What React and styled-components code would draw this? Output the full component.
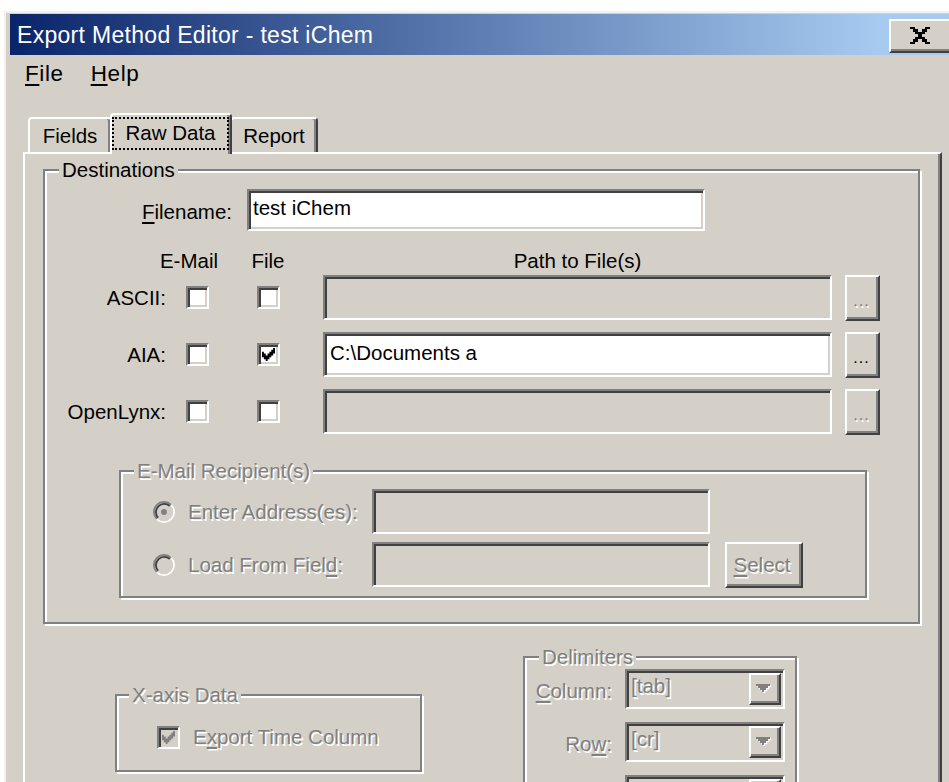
import React from "react";
import styled, { createGlobalStyle, css } from "styled-components";

const FACE = "#d4d0c8";
const SHADOW = "#808080";
const DARK = "#404040";

const GlobalStyle = createGlobalStyle`
  html, body { margin: 0; padding: 0; background: #fff; }
  #root { width: 949px; height: 782px; overflow: hidden; }
  * { box-sizing: border-box; }
`;

// classic 3d edges
const sunken = css`
  border: 2px solid;
  border-color: ${SHADOW} #fff #fff ${SHADOW};
  box-shadow: inset 2px 2px 0 ${DARK}, inset -2px -2px 0 ${FACE};
`;

const raised = css`
  border: 2px solid;
  border-color: #fff ${DARK} ${DARK} #fff;
  box-shadow: inset -2px -2px 0 ${SHADOW};
  background: ${FACE};
`;

const greyed = css`
  color: ${SHADOW};
  text-shadow: 1.5px 1.5px 0 #fff;
`;

const Window = styled.div`
  margin: 11px 0 0 4px;
  width: 954px;
  height: 800px;
  background: ${FACE};
  border-top: 2px solid #f2f1ed;
  border-left: 2px solid #f2f1ed;
  padding: 1px 4px 0 4px;
  font-family: "Liberation Sans", Arial, sans-serif;
  font-size: 20.5px;
  line-height: 24px;
  color: #000;
`;

const TitleBar = styled.div`
  display: flex;
  align-items: center;
  justify-content: space-between;
  height: 41px;
  padding: 0 0 0 7px;
  background: linear-gradient(to right, #0a246a 0%, #a6caf0 92%, #a6caf0 100%);
`;

const TitleText = styled.span`
  color: #fff;
  font-size: 23px;
  letter-spacing: 0.3px;
`;

const CloseButton = styled.div`
  ${raised};
  width: 65px;
  height: 34px;
  margin-top: 3px;
  display: flex;
  align-items: center;
  justify-content: center;
  padding: 0 4px 2px 0;
`;

const MenuBar = styled.div`
  display: flex;
  gap: 27px;
  height: 38px;
  padding: 7px 0 0 15px;
  font-size: 22.5px;
`;

const MenuItem = styled.span`
  letter-spacing: 0.6px;
`;

const U = styled.span`
  text-decoration: underline;
  text-underline-offset: 3px;
`;

const TabArea = styled.div`
  padding: 20px 12px 0 13px;
`;

const TabStrip = styled.div`
  display: flex;
  align-items: flex-end;
  height: 39px;
  padding-left: 5px;
`;

const Tab = styled.div`
  position: relative;
  width: ${(p) => p.$w}px;
  height: 35px;
  display: flex;
  align-items: center;
  justify-content: center;
  background: ${FACE};
  border: 2px solid;
  border-bottom: none;
  border-color: #fff ${DARK} transparent #fff;
  border-radius: 4px 4px 0 0;
  box-shadow: inset -2px 0 0 ${SHADOW};
  ${(p) =>
    p.$active &&
    css`
      z-index: 1;
      height: 41px;
      margin: 0 -2px -2px;
      align-items: stretch;
      padding: 0 1px 0 0;
    `}
`;

const Focus = styled.span`
  flex: 1;
  display: flex;
  align-items: center;
  justify-content: center;
  margin: 2px 0 4px;
  padding-bottom: 2px;
  border: 2px dotted #000;
`;

const Panel = styled.div`
  height: 640px;
  border-top: 2px solid #fff;
  border-left: 2px solid #fff;
  border-right: 2px solid ${DARK};
  box-shadow: inset -2px 0 0 ${SHADOW};
  padding: 4px 20px 0 18px;
`;

const Group = styled.fieldset`
  margin: 0;
  min-width: 0;
  padding: 0 0 ${(p) => p.$pb || 0}px;
  border: 2px solid ${SHADOW};
  box-shadow: inset 2px 2px 0 #fff, 2px 2px 0 #fff;
`;

const Legend = styled.legend`
  margin-left: ${(p) => p.$ml}px;
  padding: 0 3px;
  line-height: 24px;
  background: ${FACE};
  ${(p) => p.$off && greyed}
`;

const FilenameRow = styled.div`
  display: flex;
  align-items: flex-start;
  margin-top: 7px;
`;

const FieldLabel = styled.span`
  width: 187px;
  text-align: right;
  padding-top: 11px;
  margin-right: 15px;
`;

const TextBox = styled.div`
  ${sunken};
  display: flex;
  align-items: center;
  width: ${(p) => (p.$w ? `${p.$w}px` : "auto")};
  height: ${(p) => p.$h}px;
  padding: 0 4px 4px;
  background: ${(p) => (p.$off ? FACE : "#fff")};
  white-space: nowrap;
  overflow: hidden;
`;

const cols = "131px 42px 100px 519px 43px";

const HeadGrid = styled.div`
  display: grid;
  grid-template-columns: ${cols};
  height: 24px;
  margin-top: 18px;
`;

const Head = styled.span`
  justify-self: ${(p) => p.$align || "center"};
  white-space: nowrap;
`;

const DestGrid = styled.div`
  display: grid;
  grid-template-columns: ${cols};
  grid-auto-rows: 45px;
  row-gap: 12px;
  margin-top: 2px;
  align-items: center;
`;

const RowLabel = styled.span`
  justify-self: end;
  padding-right: 10px;
`;

const Box = styled.span`
  ${sunken};
  justify-self: center;
  width: 23px;
  height: 23px;
  display: flex;
  align-items: center;
  justify-content: center;
  background: ${(p) => (p.$off ? FACE : "#fff")};
`;

const PathBox = styled(TextBox)`
  margin: 0 5px;
  padding-left: 5px;
`;

const Browse = styled.div`
  ${raised};
  justify-self: end;
  width: 35px;
  height: 46px;
  display: flex;
  align-items: center;
  justify-content: center;
  padding: 6px 2px 0 0;
  font-size: 16px;
  letter-spacing: 1px;
  ${(p) => p.$off && greyed}
`;

const Recipients = styled(Group)`
  margin: 25px 51px 0 74px;
`;

const RadioRow = styled.div`
  display: flex;
  align-items: center;
  height: 45px;
  margin-top: ${(p) => p.$mt}px;
  padding-left: 32px;
`;

const RadioText = styled.span`
  width: 184px;
  margin-left: 13px;
  white-space: nowrap;
  ${greyed}
`;

const PushButton = styled.div`
  ${raised};
  width: 78px;
  height: 46px;
  margin-left: 15px;
  display: flex;
  align-items: center;
  justify-content: center;
  padding-right: 4px;
  ${greyed}
`;

const BottomRow = styled.div`
  display: flex;
  align-items: flex-start;
  margin-top: 21px;
`;

const AxisGroup = styled(Group)`
  width: 307px;
  height: 89px;
  margin: 38px 0 0 72px;
`;

const CheckRow = styled.div`
  display: flex;
  align-items: center;
  margin-top: 18px;
  padding-left: 40px;
`;

const CheckText = styled.span`
  margin-left: 13px;
  ${greyed}
`;

const DelimGroup = styled(Group)`
  width: 274px;
  height: 200px;
  margin-left: 101px;
`;

const DelimGrid = styled.div`
  display: grid;
  grid-template-columns: 87px 160px;
  grid-auto-rows: 40px;
  column-gap: 13px;
  row-gap: 13px;
  align-items: center;
`;

const DelimLabel = styled.span`
  justify-self: end;
  padding-top: 4px;
  ${greyed}
`;

const Combo = styled.div`
  ${sunken};
  display: flex;
  justify-content: space-between;
  height: 40px;
  padding: 2px 2px 2px 4px;
  background: ${FACE};
`;

const ComboText = styled.span`
  padding-top: 1px;
  ${greyed}
`;

const DropButton = styled.span`
  ${raised};
  width: 32px;
  display: flex;
  align-items: center;
  justify-content: center;
  padding: 0 2px 2px 0;
`;

const CloseGlyph = () => (
  <svg width="20" height="17" viewBox="0 0 8 7" shapeRendering="crispEdges">
    <path
      fill="#000"
      d="M0 0h2v1H0zM6 0h2v1H6zM1 1h2v1H1zM5 1h2v1H5zM2 2h4v1H2zM3 3h2v1H3zM2 4h4v1H2zM1 5h2v1H1zM5 5h2v1H5zM0 6h2v1H0zM6 6h2v1H6z"
    />
  </svg>
);

const checkPath =
  "M6 0h1v1H6zM5 1h2v1H5zM0 2h1v1H0zM4 2h3v1H4zM0 3h2v1H0zM3 3h3v1H3zM0 4h5v1H0zM1 5h3v1H1zM2 6h1v1H2z";

const CheckMark = ({ off }) => (
  <svg width="13" height="13" viewBox="0 0 7 7">
    <path fill={off ? SHADOW : "#000"} d={checkPath} />
  </svg>
);

const Radio = ({ on }) => (
  <svg width="22" height="22" viewBox="0 0 12 12">
    <circle cx="6" cy="6" r="4.2" fill={FACE} />
    <path d="M2.11 9.89A5.5 5.5 0 0 1 9.89 2.11" stroke={SHADOW} fill="none" />
    <path d="M9.89 2.11A5.5 5.5 0 0 1 2.11 9.89" stroke="#fff" fill="none" />
    <path d="M2.82 9.18A4.5 4.5 0 0 1 9.18 2.82" stroke={DARK} fill="none" />
    <path d="M9.18 2.82A4.5 4.5 0 0 1 2.82 9.18" stroke={FACE} fill="none" />
    {on && <circle cx="6" cy="6" r="1.6" fill={SHADOW} />}
  </svg>
);

const DownArrow = () => (
  <svg width="16" height="9" viewBox="0 0 8 4.5">
    <path fill="#fff" transform="translate(0.6 0.6)" d="M0 0h7v1H0zM1 1h5v1H1zM2 2h3v1H2zM3 3h1v1H3z" />
    <path fill={SHADOW} d="M0 0h7v1H0zM1 1h5v1H1zM2 2h3v1H2zM3 3h1v1H3z" />
  </svg>
);

const destinations = [
  { name: "ASCII:", file: false, path: "" },
  { name: "AIA:", file: true, path: "C:\\Documents a" },
  { name: "OpenLynx:", file: false, path: "" },
];

export default function App() {
  return (
    <>
      <GlobalStyle />
      <Window>
        <TitleBar>
          <TitleText>Export Method Editor - test iChem</TitleText>
          <CloseButton>
            <CloseGlyph />
          </CloseButton>
        </TitleBar>

        <MenuBar>
          <MenuItem>
            <U>F</U>ile
          </MenuItem>
          <MenuItem>
            <U>H</U>elp
          </MenuItem>
        </MenuBar>

        <TabArea>
          <TabStrip>
            <Tab $w={84}>Fields</Tab>
            <Tab $w={122} $active>
              <Focus>Raw Data</Focus>
            </Tab>
            <Tab $w={88}>Report</Tab>
          </TabStrip>

          <Panel>
            <Group $pb={24}>
              <Legend $ml={14}>Destinations</Legend>
              <FilenameRow>
                <FieldLabel>
                  <U>F</U>ilename:
                </FieldLabel>
                <TextBox $w={458} $h={42}>
                  test iChem
                </TextBox>
              </FilenameRow>

              <HeadGrid>
                <span />
                <Head $align="end">E-Mail</Head>
                <Head>File</Head>
                <Head>Path to File(s)</Head>
              </HeadGrid>

              <DestGrid>
                {destinations.map((d) => (
                  <React.Fragment key={d.name}>
                    <RowLabel>{d.name}</RowLabel>
                    <Box />
                    <Box>{d.file && <CheckMark />}</Box>
                    <PathBox $h={45} $off={!d.path}>
                      {d.path}
                    </PathBox>
                    <Browse $off={!d.path}>...</Browse>
                  </React.Fragment>
                ))}
              </DestGrid>

              <Recipients $pb={9}>
                <Legend $ml={13} $off>
                  E-Mail Recipient(s)
                </Legend>
                <RadioRow $mt={6}>
                  <Radio on />
                  <RadioText>Enter Address(es):</RadioText>
                  <TextBox $w={338} $h={45} $off />
                </RadioRow>
                <RadioRow $mt={8}>
                  <Radio />
                  <RadioText>
                    Load From Fiel<U>d</U>:
                  </RadioText>
                  <TextBox $w={338} $h={45} $off />
                  <PushButton>
                    <U>S</U>elect
                  </PushButton>
                </RadioRow>
              </Recipients>
            </Group>

            <BottomRow>
              <AxisGroup>
                <Legend $ml={12} $off>
                  X-axis Data
                </Legend>
                <CheckRow>
                  <Box $off>
                    <CheckMark off />
                  </Box>
                  <CheckText>
                    E<U>x</U>port Time Column
                  </CheckText>
                </CheckRow>
              </AxisGroup>

              <DelimGroup>
                <Legend $ml={14} $off>
                  Delimiters
                </Legend>
                <DelimGrid>
                  <DelimLabel>
                    <U>C</U>olumn:
                  </DelimLabel>
                  <Combo>
                    <ComboText>[tab]</ComboText>
                    <DropButton>
                      <DownArrow />
                    </DropButton>
                  </Combo>
                  <DelimLabel>
                    Ro<U>w</U>:
                  </DelimLabel>
                  <Combo>
                    <ComboText>[cr]</ComboText>
                    <DropButton>
                      <DownArrow />
                    </DropButton>
                  </Combo>
                  <DelimLabel />
                  <Combo>
                    <ComboText />
                    <DropButton>
                      <DownArrow />
                    </DropButton>
                  </Combo>
                </DelimGrid>
              </DelimGroup>
            </BottomRow>
          </Panel>
        </TabArea>
      </Window>
    </>
  );
}
